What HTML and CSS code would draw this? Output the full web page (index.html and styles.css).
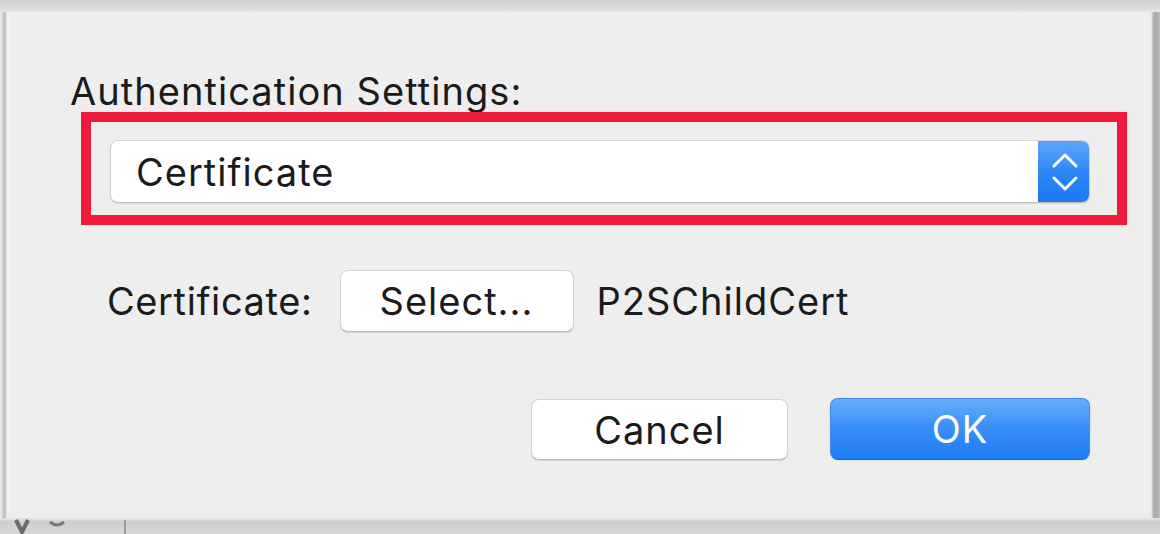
FILE: index.html
```html
<!DOCTYPE html>
<html lang="en">
<head>
<meta charset="utf-8">
<title>Authentication Settings</title>
<link rel="stylesheet" href="styles.css">
</head>
<body>
<div class="frame">
  <div class="topbar"></div>
  <div class="middle">
    <div class="edge-left"></div>
    <div class="sheet">
      <div class="section-label">Authentication Settings:</div>
      <div class="highlight">
        <div class="popup">
          <span class="popup-text">Certificate</span>
          <span class="stepper">
            <svg width="52" height="63" viewBox="0 0 52 63" aria-hidden="true">
              <polyline points="16,26 27,15 38,26" fill="none" stroke="#fff" stroke-width="3" stroke-linecap="round" stroke-linejoin="round"/>
              <polyline points="16,38 27,49 38,38" fill="none" stroke="#fff" stroke-width="3" stroke-linecap="round" stroke-linejoin="round"/>
            </svg>
          </span>
        </div>
      </div>
      <div class="cert-row">
        <span class="cert-label">Certificate:</span>
        <button class="btn btn-select">Select...</button>
        <span class="cert-name">P2SChildCert</span>
      </div>
      <div class="actions">
        <button class="btn btn-cancel">Cancel</button>
        <button class="btn btn-ok">OK</button>
      </div>
    </div>
    <div class="edge-right"></div>
  </div>
  <div class="bottombar">
    <svg class="bottom-icons" width="120" height="16" viewBox="0 0 120 16" aria-hidden="true">
      <path d="M16 2 L22 14 L28 2" fill="none" stroke="#6a6a6a" stroke-width="4"/>
      <path d="M50 4 Q57 10 64 4" fill="none" stroke="#7a7a7a" stroke-width="3"/>
    </svg>
    <div class="bottom-divider"></div>
  </div>
</div>
</body>
</html>
```

FILE: styles.css
```css
html, body {
  margin: 0;
  padding: 0;
}

body {
  width: 1160px;
  height: 534px;
  overflow: hidden;
  background: #d2d2d2;
  font-family: "Inter", "Liberation Sans", sans-serif;
  color: #1b1b1b;
}

.frame {
  display: flex;
  flex-direction: column;
  width: 1160px;
  height: 534px;
}

.topbar {
  height: 12px;
  flex: none;
  background: linear-gradient(#cfcfcf, #dedede 70%, #e6e6e6);
}

.middle {
  display: flex;
  flex: none;
  height: 506px;
}

.edge-left {
  width: 9px;
  flex: none;
  background: linear-gradient(90deg, #e4e4e4 0, #e4e4e4 2px, #c2c2c2 3px, #c6c6c6 6px, #f3f3f3 7px, #f3f3f3 9px);
}

.edge-right {
  width: 10px;
  flex: none;
  background: linear-gradient(90deg, #e9e9e9 0, #e2e2e2 2px, #b3b3b3 3px, #a9a9a9 6px, #bdbdbd 10px);
}

.sheet {
  flex: 1;
  min-width: 0;
  background: #eeeeee;
  padding: 59px 23px 0 61px;
  display: flex;
  flex-direction: column;
  align-items: flex-start;
}

.section-label {
  font-size: 38px;
  line-height: 40px;
  letter-spacing: 1.05px;
}

.highlight {
  margin-top: 1px;
  margin-left: 11px;
  width: 1046px;
  box-sizing: border-box;
  border: 10px solid #ee1b3b;
  padding: 18px 27px 12px 19px;
}

.popup {
  display: flex;
  align-items: center;
  height: 63px;
  box-sizing: border-box;
  background: #ffffff;
  border: 1px solid #d2d2d2;
  border-bottom-color: #bdbdbd;
  border-radius: 8px;
  box-shadow: 0 1px 1px rgba(0, 0, 0, 0.08);
  overflow: hidden;
}

.popup-text {
  flex: 1;
  padding-left: 25px;
  font-size: 38px;
  line-height: 46px;
  letter-spacing: 1px;
}

.stepper {
  flex: none;
  width: 52px;
  height: 63px;
  margin: -1px -1px -1px 0;
  background: linear-gradient(#5ba7fb, #2a86f6 55%, #1a78f2);
  border-radius: 0 8px 8px 0;
  display: flex;
}

.cert-row {
  margin-top: 45px;
  margin-left: 37px;
  display: flex;
  align-items: center;
  height: 62px;
}

.cert-label,
.cert-name {
  font-size: 38px;
  line-height: 46px;
  letter-spacing: 1px;
}

.cert-label {
  letter-spacing: 0.6px;
}

.btn {
  font-family: inherit;
  font-size: 38px;
  line-height: 46px;
  letter-spacing: 1px;
  color: #1b1b1b;
  box-sizing: border-box;
  border-radius: 8px;
  padding: 0;
  cursor: default;
}

.btn-select,
.btn-cancel {
  background: #ffffff;
  border: 1px solid #d4d4d4;
  border-bottom-color: #b8b8b8;
  box-shadow: 0 1px 1px rgba(0, 0, 0, 0.12);
}

.btn-select {
  width: 234px;
  height: 62px;
  margin: 0 23px 0 27px;
}

.actions {
  margin-top: 66px;
  margin-right: 37px;
  align-self: flex-end;
  display: flex;
  gap: 42px;
  align-items: center;
}

.btn-cancel {
  width: 257px;
  height: 61px;
  margin-top: 1px;
}

.btn-ok {
  width: 260px;
  height: 62px;
  color: #ffffff;
  background: linear-gradient(#66aefb, #3b90f8 45%, #1d7bf3);
  border: 1px solid #3c8ef3;
  border-bottom-color: #1766d8;
  box-shadow: 0 0 0 1px rgba(180, 215, 255, 0.35);
}

.bottombar {
  flex: 1;
  display: flex;
  align-items: flex-end;
  background: linear-gradient(#e2e2e2 0, #e2e2e2 2px, #cfcfcf 3px, #d6d6d6);
}

.bottom-icons {
  display: block;
}

.bottom-divider {
  width: 2px;
  height: 14px;
  margin-left: 4px;
  background: #9c9c9c;
}
```
